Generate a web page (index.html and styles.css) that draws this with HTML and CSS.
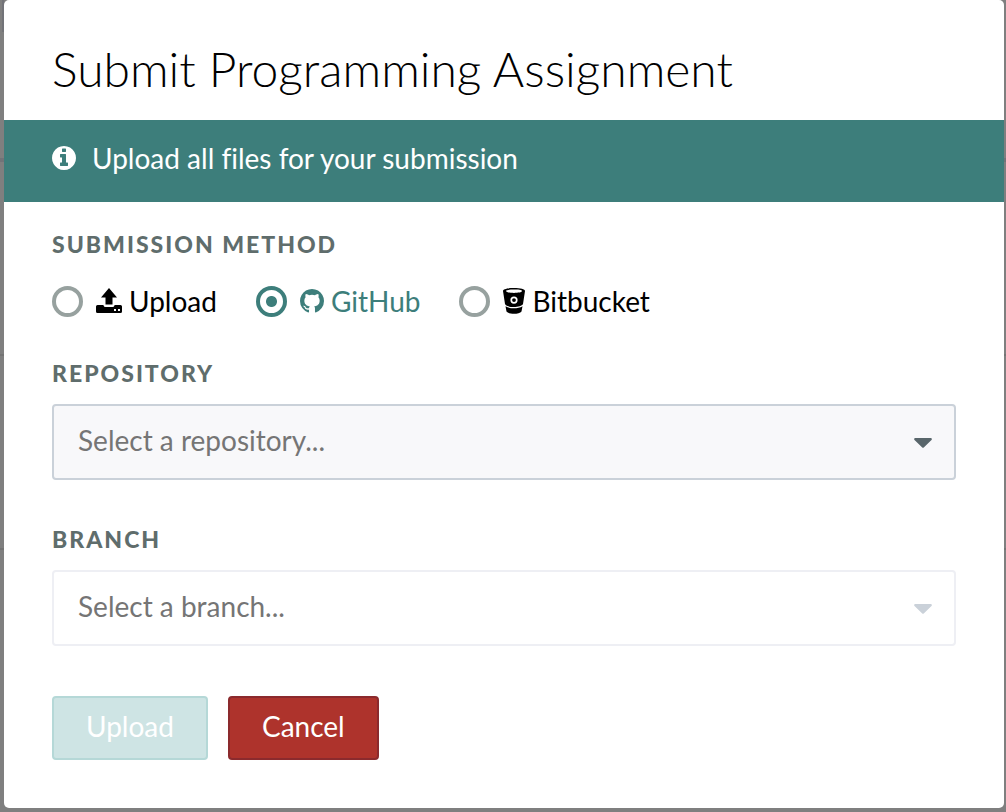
FILE: index.html
```html
<!DOCTYPE html>
<html lang="en">
<head>
<meta charset="utf-8">
<meta name="viewport" content="width=device-width, initial-scale=1">
<title>Submit Programming Assignment</title>
<link rel="stylesheet" href="styles.css">
</head>
<body>
<main class="modal">
  <h1 class="title">Submit Programming Assignment</h1>
  <div class="notice">
    <svg class="info-icon" viewBox="128 128 1536 1536" aria-hidden="true"><path d="M1152 1376v-160q0-14-9-23t-23-9h-96v-512q0-14-9-23t-23-9h-320q-14 0-23 9t-9 23v160q0 14 9 23t23 9h96v320h-96q-14 0-23 9t-9 23v160q0 14 9 23t23 9h448q14 0 23-9t9-23zm-128-896v-160q0-14-9-23t-23-9h-192q-14 0-23 9t-9 23v160q0 14 9 23t23 9h192q14 0 23-9t9-23zm640 416q0 209-103 385.5t-279.5 279.5-385.5 103-385.5-103-279.5-279.5-103-385.5 103-385.5 279.5-279.5 385.5-103 385.5 103 279.5 279.5 103 385.5z"/></svg>
    <span>Upload all files for your submission</span>
  </div>
  <form class="form">
    <fieldset class="methods">
      <legend class="label">Submission Method</legend>
      <div class="options">
        <label class="option"><input class="radio" type="radio" name="method" value="upload">
          <svg class="icon icon-upload" viewBox="0 0 26 26" aria-hidden="true"><path d="M13 0L21 9.500H16.500V16.500H9.500V9.500H5Z"/><path fill-rule="evenodd" d="M1.500 17H7.500V17.500Q8 19 9.500 19H16.500Q18 19 18.500 17.500V17H24.500Q26 17 26 18.500V23.500Q26 25 24.500 25H1.500Q0 25 0 23.500V18.500Q0 17 1.500 17ZM18 21V23H20V21ZM22 21V23H24V21Z"/></svg><span>Upload</span></label>
        <label class="option"><input class="radio" type="radio" name="method" value="github" checked>
          <svg class="icon icon-github" viewBox="128 128 1536 1536" aria-hidden="true"><path d="M896 128q209 0 385.5 103t279.5 279.5 103 385.5q0 251-146.5 451.5t-378.5 277.5q-27 5-40-7t-13-30q0-3 .5-76.5t.5-134.5q0-97-52-142 57-6 102.5-18t94-39 81-66.5 53-105 20.5-150.500q0-119-79-206 37-91-8-204-28-9-81 11t-92 44l-38 24q-93-26-192-26t-192 26q-16-11-42.5-27t-83.5-38.5-85-13.500q-45 113-8 204-79 87-79 206 0 85 20.500 150t52.500 105 80.500 67 94 39 102.500 18q-39 36-49 103-21 10-45 15t-57 5-65.500-21.500-55.500-62.500q-19-32-48.500-52t-49.500-24l-20-3q-21 0-29 4.500t-5 11.500 9 14 13 12l7 5q22 10 43.500 38t31.500 51l10 23q13 38 44 61.500t67 30 69.500 7 55.500-3.500l23-4q0 38 .5 88.500t.5 54.500q0 18-13 30t-40 7q-232-77-378.500-277.500t-146.500-451.500q0-209 103-385.500t279.500-279.500 385.500-103z"/></svg><span>GitHub</span></label>
        <label class="option"><input class="radio" type="radio" name="method" value="bitbucket">
          <svg class="icon icon-bitbucket" viewBox="0 0 22 26" aria-hidden="true"><path fill-rule="evenodd" d="M0 3C0 1 4.500 0 11 0S22 1 22 3L20 16C19 18 15 19 11 19S3 18 2 16ZM3 3C3 4.200 7 4.900 11 4.900S19 4.200 19 3S15 1.500 11 1.500S3 1.800 3 3ZM11 8.500A3.600 3.600 0 1 0 11 15.700A3.600 3.600 0 1 0 11 8.500ZM11 10.200A1.900 1.900 0 1 1 11 14A1.900 1.900 0 1 1 11 10.200Z"/><path d="M2.500 18.300C7 21 15 21 19.500 18.300L18.500 23.500C17.500 25 14 25.800 11 25.800S4.500 25 3.500 23.500Z"/></svg><span>Bitbucket</span></label>
      </div>
    </fieldset>
    <div class="field">
      <label class="label" for="repository">Repository</label>
      <div class="select-wrap">
        <select class="select" id="repository"><option>Select a repository...</option></select>
        <svg class="caret" viewBox="0 0 18 10" aria-hidden="true"><path d="M1 0H17Q18.500 .5 17.500 2L10 9.300Q9 10.300 8 9.300L.5 2Q-.5 .5 1 0Z"/></svg>
      </div>
    </div>
    <div class="field">
      <label class="label" for="branch">Branch</label>
      <div class="select-wrap">
        <select class="select" id="branch" disabled><option>Select a branch...</option></select>
        <svg class="caret" viewBox="0 0 18 10" aria-hidden="true"><path d="M1 0H17Q18.500 .5 17.500 2L10 9.300Q9 10.300 8 9.300L.5 2Q-.5 .5 1 0Z"/></svg>
      </div>
    </div>
    <div class="actions">
      <button class="button button-primary" type="submit" disabled>Upload</button>
      <button class="button button-danger" type="button">Cancel</button>
    </div>
  </form>
</main>
</body>
</html>
```
FILE: styles.css
```css
* {
  box-sizing: border-box;
}

/* The background shows the page rules dimmed behind the dialog */
body {
  margin: 0;
  padding: 0 2px 4px 4px;
  background:
    linear-gradient(#727378, #727378) 2px 0 / 2px 32px no-repeat,
    linear-gradient(#727378, #727378) 0 158px / 100% 4px no-repeat,
    linear-gradient(#747474, #747474) 0 354px / 100% 2px no-repeat,
    linear-gradient(#747474, #747474) 0 548px / 100% 2px no-repeat,
    #7f7f7f;
  color: #000;
  font-family: Lato, "Open Sans", sans-serif;
  font-size: 28px;
  font-variant-ligatures: none;
  line-height: 36px;
}

.modal {
  background: #fff;
  border-radius: 5px;
}

.title {
  margin: 0;
  padding: 39px 48px 21px;
  font-size: 48px;
  font-weight: 300;
  line-height: 60px;
}

.notice {
  display: flex;
  align-items: center;
  gap: 16px;
  padding: 20px 48px 26px;
  background: #3d7e7b;
  color: #fff;
}

.info-icon {
  width: 24px;
  height: 24px;
  fill: currentColor;
}

.form {
  padding: 28px 48px 48px;
}

.methods {
  margin: 0;
  padding: 0;
  border: 0;
}

.label {
  display: block;
  padding: 0;
  color: #5f6d6c;
  font-size: 23px;
  font-weight: 900;
  letter-spacing: 2px;
  line-height: 28px;
  text-transform: uppercase;
}

.options {
  display: flex;
  flex-wrap: wrap;
  gap: 12px 39px;
  padding: 25px 0 40px;
}

.option {
  display: flex;
  align-items: center;
}

.option:has(:checked) {
  color: #3d7e7b;
}

.radio {
  appearance: none;
  width: 31px;
  height: 31px;
  margin: 0 13px 0 0;
  border: 4px solid #97a19f;
  border-radius: 50%;
}

.radio:checked {
  border-color: #3d7e7b;
  background: radial-gradient(circle, #3d7e7b 5px, #fff 6px);
}

.icon {
  margin-right: 7px;
  fill: currentColor;
}

.icon-upload {
  width: 26px;
  height: 26px;
}

.icon-github {
  width: 24px;
  height: 24px;
}

.icon-bitbucket {
  width: 22px;
  height: 26px;
}

.field {
  margin-bottom: 45px;
}

.select-wrap {
  position: relative;
  margin-top: 17px;
}

.select {
  appearance: none;
  display: block;
  width: 100%;
  height: 76px;
  padding: 0 64px 4px 24px;
  border: 2px solid #cad1d9;
  border-radius: 4px;
  background: #f8f8fa;
  color: #757575;
  font: inherit;
  opacity: 1;
}

.select:disabled {
  border-color: #eeeff4;
  background: #fff;
}

.caret {
  position: absolute;
  top: 34px;
  right: 24px;
  width: 18px;
  height: 10px;
  fill: #59666b;
  pointer-events: none;
}

.select:disabled + .caret {
  fill: #cad1d9;
}

.actions {
  display: flex;
  gap: 20px;
  padding-top: 5px;
}

.button {
  height: 64px;
  padding: 0 32px 4px;
  border: 2px solid;
  border-radius: 4px;
  color: #fff;
  font: inherit;
}

.button-primary {
  border-color: #b5d8d7;
  background: #cee4e4;
}

.button-danger {
  border-color: #8b2a2d;
  background: #ae332c;
}
```
